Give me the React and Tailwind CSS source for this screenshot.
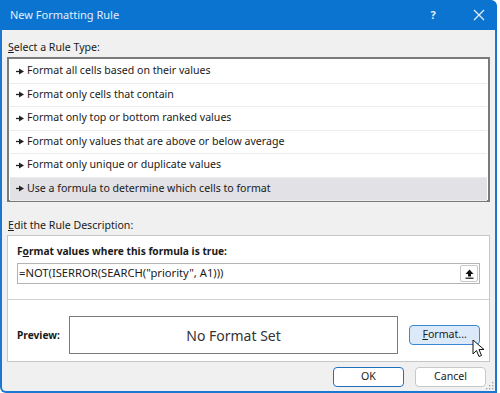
import { useState } from 'react';

const RULES = [
  'Format all cells based on their values',
  'Format only cells that contain',
  'Format only top or bottom ranked values',
  'Format only values that are above or below average',
  'Format only unique or duplicate values',
  'Use a formula to determine which cells to format',
];

function Arrow() {
  return (
    <svg width="8" height="7" viewBox="0 0 8 7" className="shrink-0">
      <path d="M0 3.5 H4" stroke="#222" strokeWidth="1.3" />
      <path d="M3 0.5 L8 3.5 L3 6.5 Z" fill="#222" />
    </svg>
  );
}

export default function App() {
  const [selected, setSelected] = useState(5);

  return (
    <div className="w-[500px] h-[393px] bg-white overflow-hidden" style={{ fontFamily: '"Noto Sans", "Open Sans", sans-serif' }}>
      <div className="w-[497px] h-[393px] flex flex-col border-2 border-t-0 border-[#1a78d2] rounded-tr-[8px] rounded-bl-[6px] bg-[#f0f0f0] text-[10.6px] text-[#1a1a1a] relative">
        {/* Barra de título */}
        <div className="h-[30px] bg-[#0a74d0] rounded-tr-[6px] flex items-center -mx-[2px] pl-[10px] text-[11px] text-[#e3eefa]">
          <span className="flex-1">New Formatting Rule</span>
          <span className="w-[20px] text-center font-bold text-[11px]">?</span>
          <svg width="12" height="12" viewBox="0 0 12 12" className="ml-[30px] mr-[12px]">
            <path d="M1 1 L11 11 M11 1 L1 11" stroke="#e3eefa" strokeWidth="1.3" />
          </svg>
        </div>

        <div className="px-[5px]">
          <div className="mt-[8px] h-[18px] leading-[18px] ml-[1px]">
            <u>S</u>elect a Rule Type:
          </div>
          <div className="mt-[1px] h-[145px] border-2 border-[#7a7a7a] bg-white p-[1px]">
            {RULES.map((r, i) => (
              <div
                key={r}
                onClick={() => setSelected(i)}
                className={`h-[23.5px] flex items-center gap-[3px] pl-[6px] border-b border-[#ececec] ${selected === i ? 'bg-[#e1e1e6]' : ''}`}
              >
                <Arrow />
                <span>{r}</span>
              </div>
            ))}
          </div>

          <div className="mt-[14px] h-[18px] leading-[18px] ml-[1px]">
            <u>E</u>dit the Rule Description:
          </div>
          <div className="mt-[1px] h-[127px] border border-[#c6c6c6] bg-white flex flex-col">
            <div className="px-[9px] pt-[6px]">
              <div className="font-bold h-[18px] leading-[18px] text-[10.2px]">
                F<u>o</u>rmat values where this formula is true:
              </div>
              <div className="mt-[3px] h-[21px] border border-[#b4b4b4] flex items-center pl-[1px] pr-[1px]">
                <span className="flex-1 text-[11.2px]">=NOT(ISERROR(SEARCH("priority", A1)))</span>
                <div className="w-[18px] h-[17px] border border-[#c8c8c8] rounded-[2px] flex items-center justify-center bg-white">
                  <svg width="9" height="10" viewBox="0 0 9 10">
                    <path d="M4.5 0.5 L8.5 5 H6 V7.5 H3 V5 H0.5 Z" fill="#111" />
                    <path d="M0.5 9.2 H8.5" stroke="#111" strokeWidth="1.2" />
                  </svg>
                </div>
              </div>
            </div>
            <div className="mt-[15px] border-t border-[#d2d2d2] flex-1 flex items-start pt-[16px] px-[9px]">
              <span className="font-bold w-[52px] text-[10.2px] leading-[38px]">Preview:</span>
              <div className="w-[331px] h-[38px] border border-[#7a7a7a] flex items-center justify-center text-[14px] text-[#333]">
                No Format Set
              </div>
              <button className="ml-[11px] mt-[9px] w-[71px] h-[20px] rounded-[4px] border border-[#3b88d6] bg-[#dbe9f8] text-[10.6px] flex items-center justify-center relative">
                <span><u>F</u>ormat...</span>
                <svg width="13" height="20" viewBox="0 0 13 20" className="absolute left-[62px] top-[13px]">
                  <path d="M1 1 L1 15 L4.5 11.5 L7 17.5 L9.5 16.5 L7 10.5 L12 10.5 Z" fill="#fff" stroke="#111" strokeWidth="1" strokeLinejoin="round" />
                </svg>
              </button>
            </div>
          </div>

          <div className="mt-[5px] flex justify-end gap-[11px] pr-[4px]">
            <button className="w-[71px] h-[20px] rounded-[4px] border border-[#1f6fbf] bg-white text-[10.6px]">OK</button>
            <button className="w-[71px] h-[20px] rounded-[4px] border border-[#c8c8c8] bg-white text-[10.6px]">Cancel</button>
          </div>
        </div>

        <svg width="8" height="8" viewBox="0 0 8 8" className="absolute right-[1px] bottom-[1px]">
          <rect x="6" y="0" width="1.4" height="1.4" fill="#a8a8a8" />
          <rect x="3" y="3" width="1.4" height="1.4" fill="#a8a8a8" />
          <rect x="6" y="3" width="1.4" height="1.4" fill="#a8a8a8" />
          <rect x="0" y="6" width="1.4" height="1.4" fill="#a8a8a8" />
          <rect x="3" y="6" width="1.4" height="1.4" fill="#a8a8a8" />
          <rect x="6" y="6" width="1.4" height="1.4" fill="#a8a8a8" />
        </svg>
      </div>
    </div>
  );
}
